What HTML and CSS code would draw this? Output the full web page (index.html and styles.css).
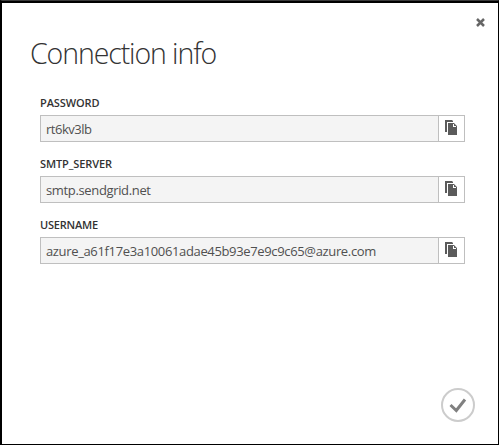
FILE: index.html
```html
<!DOCTYPE html>
<html lang="en">
<head>
<meta charset="utf-8">
<title>Connection info</title>
<link rel="stylesheet" href="styles.css">
</head>
<body>
<svg class="symbols" aria-hidden="true">
  <symbol id="copy" viewBox="0 0 12 15">
    <path d="M0 0H7L8 1V2H2V12H0Z"/>
    <path fill-rule="evenodd" d="M3 3H9L12 6V15H3ZM8 4V7H11V6H9V4Z"/>
  </symbol>
</svg>
<main class="dialog">
  <button class="close" aria-label="Close"><svg width="9" height="9" viewBox="0 0 9 9"><path d="M1 1L8 8M8 1L1 8"/></svg></button>
  <h1 class="title">Connection info</h1>
  <div class="fields">
    <section>
      <h2 class="label password">PASSWORD</h2>
      <div class="field"><div class="value v1">rt6kv3lb</div><button class="copy" aria-label="Copy"><svg><use href="#copy"/></svg></button></div>
    </section>
    <section>
      <h2 class="label server">SMTP_SERVER</h2>
      <div class="field"><div class="value v2">smtp.sendgrid.net</div><button class="copy" aria-label="Copy"><svg><use href="#copy"/></svg></button></div>
    </section>
    <section>
      <h2 class="label username">USERNAME</h2>
      <div class="field"><div class="value v3">azure_a61f17e3a10061adae45b93e7e9c9c65@azure.com</div><button class="copy" aria-label="Copy"><svg><use href="#copy"/></svg></button></div>
    </section>
  </div>
  <button class="confirm" aria-label="OK"><svg width="34" height="34" viewBox="0 0 34 34"><circle cx="17" cy="17" r="16"/><path d="M9.5 17L15.3 22.5L24 11.5"/></svg></button>
</main>
</body>
</html>
```

FILE: styles.css
```css
* { box-sizing: border-box; }
body { margin: 0; background: #000; font-family: "Open Sans", "Noto Sans", sans-serif; }
button { display: flex; padding: 0; border: 0; background: none; }
.symbols { display: none; }
.dialog {
  display: flex;
  flex-direction: column;
  height: 445px;
  border: 1px solid #000;
  border-left-width: 2px;
  border-top-color: #3a3a3a;
  background: #fff;
  box-shadow: inset 0 2px #000;
  padding-top: 17px;
}
.close { align-self: flex-end; margin-right: 13px; }
.close path { fill: none; stroke: #666; stroke-width: 2.5; }
.title {
  margin: 6px 0 0 28px;
  height: 40px;
  font-size: 28.5px;
  line-height: 40px;
  font-weight: 300;
  color: #333;
  letter-spacing: -1.1px;
  white-space: nowrap;
}
.fields { display: grid; gap: 15px; margin: 23px 33px 0 38px; }
.label { margin: 0 0 6px; height: 13px; font-size: 11px; line-height: 13px; font-weight: 600; color: #333; letter-spacing: -0.1px; }
.username { letter-spacing: -0.2px; }
.field { display: flex; height: 27px; border: 1px solid #bfbfbf; }
.value { flex: 1; padding-left: 5px; background: #f4f4f4; color: #505050; font-size: 13px; line-height: 27px; white-space: nowrap; letter-spacing: -0.35px; }
.v1 { letter-spacing: -0.5px; }
.copy { width: 26px; height: 25px; padding: 4px 0 0 6px; border-left: 1px solid #bfbfbf; }
.copy svg { width: 12px; height: 15px; fill: #5b5b5b; }
.confirm { align-self: flex-end; margin: auto 23px 22px 0; }
.confirm svg { fill: none; }
.confirm circle { stroke: #ccc; stroke-width: 2; }
.confirm path { stroke: #808080; stroke-width: 3; }
```
